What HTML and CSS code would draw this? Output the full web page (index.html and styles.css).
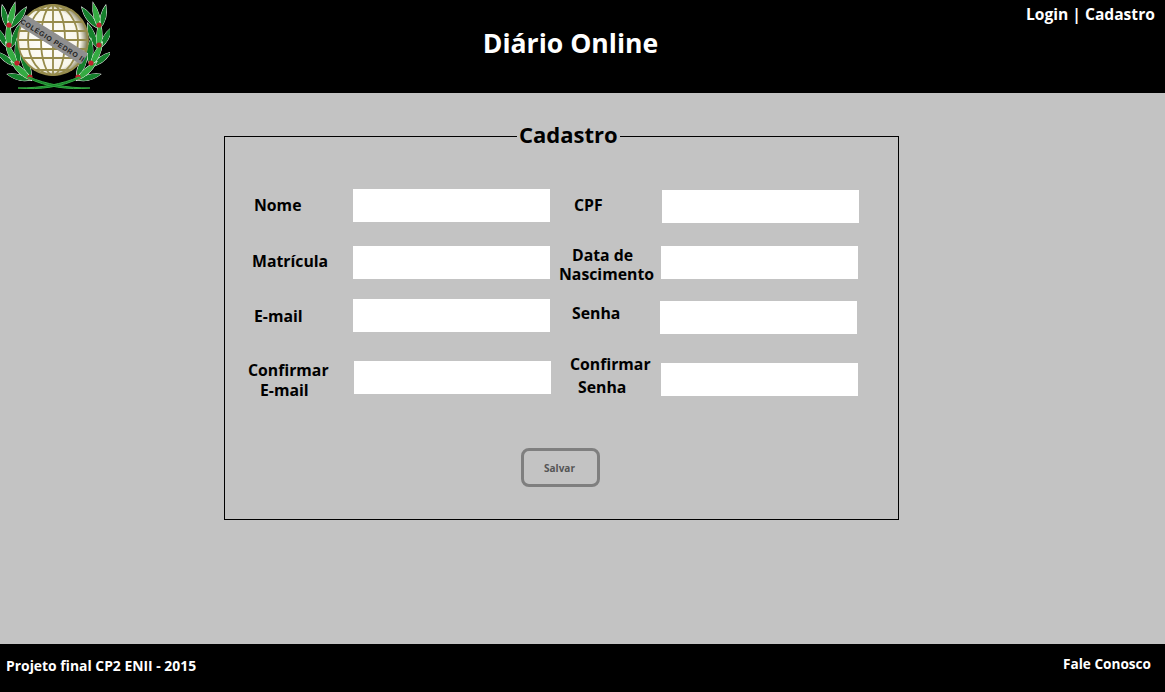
FILE: index.html
```html
<!DOCTYPE html>
<html lang="en">
<head>
    <meta charset="UTF-8">
    <title>Diário Online</title>
    <link rel="stylesheet" href="styles.css">
</head>
<body>
    <div class="header">
        <svg class="logo" width="110" height="93" viewBox="0 0 110 93">
            <defs>
                <radialGradient id="globe-fill" cx="0.45" cy="0.5" r="0.55">
                    <stop offset="0" stop-color="#fff"/>
                    <stop offset="0.8" stop-color="#f8f6ea"/>
                    <stop offset="1" stop-color="#77724e"/>
                </radialGradient>
                <g id="sprig">
                    <path d="M0 3C-9 -3 -13 -12 -13 -22C-7 -17 -3 -9 0 3Z"/>
                    <path d="M0 3C8 -3 11 -11 11 -19C6 -15 2 -8 0 3Z"/>
                    <path d="M0 3C-4 -5 -4 -14 -1 -24C3 -15 4 -6 0 3Z" fill="#35ab42"/>
                </g>
                <g id="branch">
                    <g stroke="#fff" stroke-width="1" fill="#15802c" paint-order="stroke">
                        <use href="#sprig" transform="translate(99 26) rotate(-12)"/>
                        <use href="#sprig" transform="translate(99 46) rotate(4)"/>
                        <use href="#sprig" transform="translate(92 64) rotate(28)"/>
                        <use href="#sprig" transform="translate(79 78) rotate(50)"/>
                    </g>
                    <g fill="#c0222c">
                        <circle cx="99" cy="25" r="2.6"/>
                        <circle cx="99" cy="45" r="2.6"/>
                        <circle cx="91" cy="63" r="2.6"/>
                        <circle cx="78" cy="77" r="2.6"/>
                    </g>
                    <path d="M18 88C42 88 62 84 79 77L80 78C62 87 40 90 18 88Z" fill="#15802c" stroke="#35ab42" stroke-width="1"/>
                </g>
            </defs>
            <use href="#branch"/>
            <use href="#branch" transform="translate(108 0) scale(-1 1)"/>
            <circle cx="53" cy="40" r="35" fill="url(#globe-fill)"/>
            <g fill="none" stroke="#968b4c" stroke-width="1.8">
                <circle cx="53" cy="40" r="35"/>
                <ellipse cx="53" cy="40" rx="12" ry="35"/>
                <ellipse cx="53" cy="40" rx="25" ry="35"/>
                <path d="M53 5V75M18 40H88M23 22H83M23 58H83M34 10H72M34 70H72M19 31H87M19 49H87"/>
            </g>
            <g transform="rotate(32 53 40)">
                <rect x="16" y="33" width="74" height="13" rx="2" fill="#8f8f8f"/>
                <text class="logo-text" x="53" y="43" text-anchor="middle">COLÉGIO PEDRO II</text>
            </g>
        </svg>
        <h1>Diário Online</h1>
        <div class="top-links">Login | Cadastro</div>
    </div>

    <div class="content">
        <fieldset class="box">
            <legend>Cadastro</legend>
            <div class="form-grid">
                <div class="field">
                    <label class="lbl-nome">Nome</label>
                    <input type="text">
                </div>
                <div class="field">
                    <label class="lbl-cpf">CPF</label>
                    <input type="text">
                </div>
                <div class="field">
                    <label class="lbl-matricula">Matrícula</label>
                    <input type="text">
                </div>
                <div class="field">
                    <label class="lbl-data"><span class="indent-data">Data de</span><br>Nascimento</label>
                    <input type="text">
                </div>
                <div class="field">
                    <label class="lbl-email">E-mail</label>
                    <input type="text">
                </div>
                <div class="field">
                    <label class="lbl-senha">Senha</label>
                    <input type="password">
                </div>
                <div class="field">
                    <label class="lbl-conf-email">Confirmar<br><span class="indent-email">E-mail</span></label>
                    <input type="text">
                </div>
                <div class="field">
                    <label class="lbl-conf-senha">Confirmar<br><span class="indent-senha">Senha</span></label>
                    <input type="password">
                </div>
            </div>
            <button class="save-btn">Salvar</button>
        </fieldset>
    </div>

    <div class="footer">
        <span class="project">Projeto final CP2 ENII - 2015</span>
        <span class="contact">Fale Conosco</span>
    </div>
</body>
</html>
```

FILE: styles.css
```css
* {
    box-sizing: border-box;
    margin: 0;
    padding: 0;
}

html, body {
    height: 100%;
}

body {
    display: flex;
    flex-direction: column;
    font-family: "Open Sans", Arial, sans-serif;
    font-weight: bold;
    background-color: #c3c3c3;
    color: #000;
}

.header {
    display: flex;
    height: 93px;
    background-color: #000;
    color: #fff;
}

.logo {
    flex: none;
}

.logo-text {
    font-family: "Liberation Sans", Arial, sans-serif;
    font-size: 7px;
    font-weight: bold;
    letter-spacing: 0.6px;
    fill: #222;
}

.header h1 {
    width: 921px;
    padding-top: 25px;
    font-size: 26.6px;
    line-height: 36px;
    text-align: center;
}

.top-links {
    margin-left: -5px;
    padding-top: 4px;
    font-size: 15.6px;
    line-height: 20px;
    white-space: nowrap;
}

.content {
    flex: 1;
    padding: 28px 0 0 224px;
}

.box {
    width: 675px;
    min-width: 0;
    height: 399px;
    border: 1px solid #000;
}

.box legend {
    margin-left: 292px;
    padding: 0 2px 4px;
    font-size: 22px;
    line-height: 26px;
}

.form-grid {
    display: grid;
    grid-template-columns: 325px 1fr;
    grid-template-rows: 57px 53px 62px 60px;
    padding-top: 38px;
}

.field {
    display: flex;
    align-items: flex-start;
    font-size: 15.8px;
    line-height: 20px;
}

.field label {
    flex: none;
    white-space: nowrap;
}

.field input {
    flex: none;
    width: 197px;
    height: 33px;
    border: none;
    background-color: #fff;
}

/* the labels and boxes do not line up in the columns, each has its own offset */
.lbl-nome { width: 128px; padding: 6px 0 0 29px; }
.lbl-matricula { width: 128px; padding: 5px 0 0 27px; }
.lbl-email { width: 128px; padding: 7px 0 0 29px; }
.lbl-conf-email { width: 129px; padding-left: 23px; margin-top: -1px; }

.lbl-cpf { width: 112px; padding: 6px 0 0 24px; }
.lbl-data { width: 111px; padding-left: 9px; line-height: 19px; }
.lbl-senha { width: 110px; padding: 4px 0 0 22px; }
.lbl-conf-senha { width: 111px; padding-left: 20px; line-height: 23px; margin-top: -8px; }

.indent-data { margin-left: 13px; }
.indent-email { margin-left: 12px; }
.indent-senha { margin-left: 8px; }

.field:nth-child(2) input { margin-top: 1px; }
.field:nth-child(6) input, .field:nth-child(8) input { margin-top: 2px; }

.save-btn {
    display: block;
    width: 79px;
    height: 39px;
    margin: 27px 0 0 296px;
    padding-right: 2px;
    border: 3px solid #7f7f7f;
    border-radius: 8px;
    background-color: transparent;
    color: #555;
    font-family: inherit;
    font-size: 10px;
    font-weight: bold;
}

.footer {
    display: flex;
    justify-content: space-between;
    height: 48px;
    padding: 13px 14px 0 6px;
    background-color: #000;
    color: #fff;
    font-size: 13.6px;
    line-height: 18px;
}

.project {
    font-size: 13.9px;
}

.contact {
    margin-top: -2px;
}
```
